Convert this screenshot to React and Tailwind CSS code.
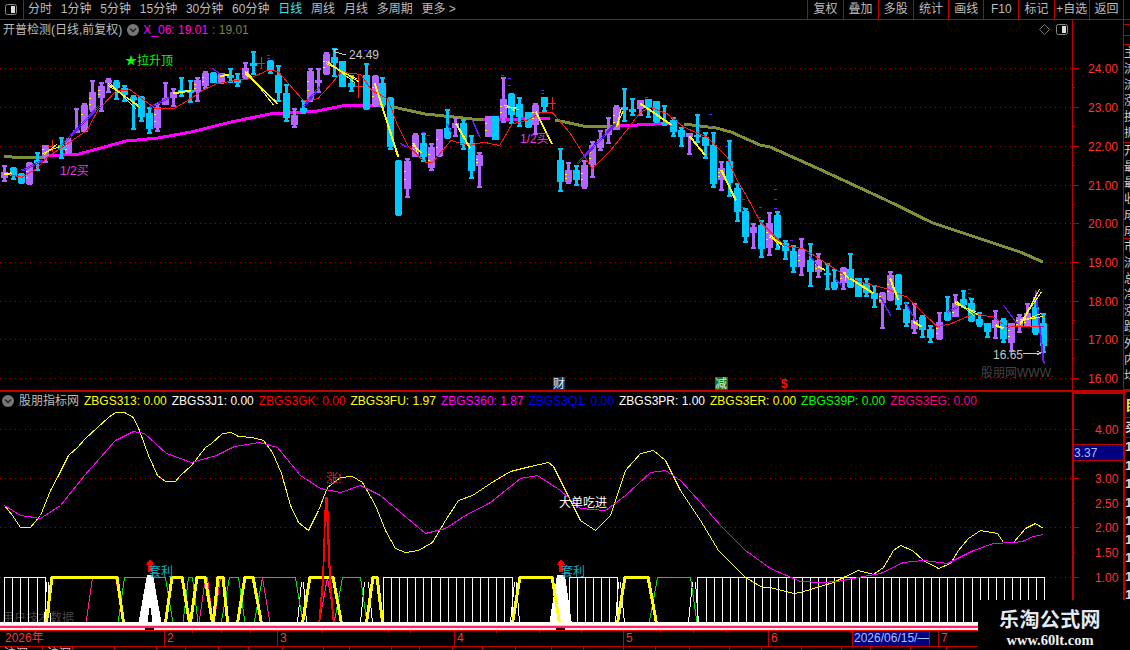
import React from "react"

const RED = "#c00000"
const PURPLE = "#b266ff"
const CYAN = "#00c8ff"

const z1 = ([x, y]) => [x / 2.775, y / 3]
const z9 = ([x, y]) => [560 + x / 3, 90 + y / 3]
const z8 = ([x, y]) => [850 + x / 3, 200 + y / 3]
const toPoints = (pts) => pts.map((p) => p.join(",")).join(" ")

// x in zoomed picture, kind, high, body top, body bottom, low (y is 3x page y)
const candlesA = [
  [12, "p", 495, 515, 535, 545], [35, "c", 500, 503, 527, 540], [57, "c", 520, 523, 550, 552], [80, "p", 485, 490, 553, 555],
  [103, "c", 455, 480, 490, 512], [124, "p", 435, 435, 470, 490], [147, "r", 420, 436, 438, 455], [168, "c", 410, 435, 450, 478],
  [190, "p", 415, 420, 460, 462], [212, "p", 325, 390, 400, 400], [234, "p", 310, 315, 395, 395], [256, "p", 240, 275, 330, 335],
  [279, "p", 245, 258, 295, 335], [301, "p", 235, 240, 250, 280], [323, "c", 240, 245, 265, 300], [345, "c", 255, 265, 285, 305],
  [368, "c", 285, 290, 300, 390], [391, "c", 288, 290, 352, 365], [414, "c", 320, 340, 388, 403], [436, "p", 310, 320, 385, 395],
  [458, "p", 245, 295, 315, 315], [481, "p", 265, 275, 295, 320], [503, "c", 230, 270, 280, 290], [526, "c", 240, 270, 280, 310],
  [548, "p", 232, 240, 275, 305], [570, "p", 212, 218, 258, 268], [592, "c", 215, 218, 248, 250], [614, "p", 218, 220, 250, 252],
  [637, "c", 203, 225, 235, 250], [659, "c", 220, 238, 250, 262], [681, "p", 185, 205, 235, 240], [703, "c", 152, 188, 198, 225],
  [725, "r", 172, 189, 191, 208], [750, "c", 180, 183, 210, 222], [772, "c", 195, 225, 278, 305], [795, "c", 252, 278, 355, 365],
  [817, "p", 325, 345, 375, 385], [840, "c", 300, 325, 335, 342], [861, "p", 203, 212, 300, 305], [883, "p", 205, 240, 250, 280],
  [906, "p", 155, 162, 222, 225], [928, "c", 145, 170, 190, 230], [950, "c", 183, 183, 260, 262], [973, "c", 225, 250, 262, 275],
  [995, "r", 225, 256, 258, 295], [1017, "c", 188, 225, 328, 330], [1040, "p", 225, 228, 318, 320], [1061, "c", 230, 250, 315, 320],
  [1083, "c", 292, 295, 440, 450], [1105, "c", 480, 482, 645, 648], [1130, "p", 475, 482, 567, 595], [1152, "p", 400, 405, 470, 472],
  [1174, "c", 400, 428, 472, 485], [1196, "p", 430, 440, 503, 512], [1219, "p", 388, 388, 468, 470], [1241, "c", 327, 385, 415, 418],
  [1263, "p", 352, 370, 385, 412], [1285, "c", 358, 370, 435, 450], [1308, "c", 405, 430, 512, 538], [1330, "p", 455, 465, 497, 565],
  [1353, "p", 348, 348, 412, 412], [1375, "c", 348, 348, 420, 420], [1397, "p", 232, 298, 355, 370], [1419, "c", 278, 282, 345, 372],
  [1441, "c", 292, 312, 350, 380], [1464, "c", 335, 335, 382, 384], [1486, "p", 310, 315, 375, 405], [1510, "c", 290, 292, 320, 335],
  [1532, "r", 292, 310, 312, 330], [1555, "c", 443, 480, 545, 575],
]

const candlesB = [
  [25, "p", 217, 240, 275, 282], [49, "c", 225, 240, 270, 288], [73, "p", 210, 225, 290, 297], [97, "p", 152, 165, 225, 265],
  [121, "p", 120, 148, 175, 182], [145, "p", 80, 118, 135, 163], [169, "p", 45, 50, 120, 120], [193, "c", -6, 52, 60, 95],
  [217, "c", 25, 58, 65, 78], [241, "p", 30, 30, 58, 77], [265, "c", 28, 28, 55, 83], [289, "c", 33, 33, 97, 100],
  [313, "c", 45, 95, 105, 107], [340, "c", 82, 90, 125, 140], [364, "c", 110, 120, 140, 170], [388, "p", 130, 130, 140, 195],
  [412, "c", 72, 135, 140, 158], [436, "c", 127, 142, 168, 208], [460, "c", 127, 165, 282, 293], [484, "p", 213, 233, 270, 303],
  [508, "c", 150, 213, 278, 320], [532, "c", 278, 295, 365, 395], [556, "c", 355, 362, 442, 460], [580, "p", 400, 410, 428, 476],
  [604, "c", 390, 405, 478, 505], [628, "p", 367, 400, 473, 498], [652, "c", 363, 375, 445, 480], [676, "c", 450, 460, 483, 510],
  [700, "c", 465, 484, 530, 550], [724, "p", 445, 477, 530, 558], [750, "c", 460, 510, 545, 590], [775, "p", 488, 510, 545, 565],
  [800, "c", 520, 548, 556, 600], [823, "c", 537, 575, 595, 600], [848, "p", 530, 535, 580, 600],
]

const candlesC = [
  [0, "c", 160, 208, 260, 265], [25, "c", 233, 235, 290, 292], [49, "c", 235, 250, 280, 290], [73, "c", 255, 280, 298, 323],
  [97, "p", 275, 278, 310, 388], [121, "p", 213, 225, 300, 302], [145, "c", 222, 225, 315, 330], [169, "c", 305, 328, 370, 382],
  [193, "p", 310, 360, 387, 402], [217, "c", 345, 350, 390, 415], [241, "c", 375, 388, 415, 430], [267, "p", 335, 365, 418, 420],
  [291, "c", 287, 337, 360, 362], [315, "p", 283, 310, 350, 352], [340, "c", 270, 298, 315, 325], [364, "c", 295, 310, 362, 365],
  [388, "c", 335, 358, 375, 380], [412, "c", 368, 368, 395, 415], [436, "p", 330, 360, 385, 418], [460, "c", 355, 360, 418, 430],
  [484, "p", 368, 370, 430, 455], [508, "p", 342, 350, 382, 398], [532, "p", 310, 340, 378, 380], [556, "c", 290, 320, 400, 405],
  [580, "c", 338, 370, 438, 460],
]

const candles = [
  ...candlesA.map(([x, k, a, b, c, d]) => [x / 2.775, k, a / 3, b / 3, c / 3, d / 3]),
  ...candlesB.map(([x, k, a, b, c, d]) => [560 + x / 3, k, 90 + a / 3, 90 + b / 3, 90 + c / 3, 90 + d / 3]),
  ...candlesC.map(([x, k, a, b, c, d]) => [850 + x / 3, k, 200 + a / 3, 200 + b / 3, 200 + c / 3, 200 + d / 3]),
]

const maSegments = [
  ["#809038", [[4, 156], [12, 157], [36, 157], [47, 157]]],
  ["#ff00ff", [[47, 156], [79, 154], [108, 146], [126, 141], [158, 138], [191, 132], [231, 122], [270, 114], [288, 113], [317, 111], [342, 106], [382, 105]]],
  ["#809038", [[393, 107], [407, 110], [425, 114], [454, 117], [472, 119], [483, 120]]],
  ["#ff00ff", [[483, 120], [520, 119], [550, 118]]],
  ["#809038", [[555, 120], [565, 122], [583, 126], [605, 127], [619, 126]]],
  ["#ff00ff", [[619, 126], [655, 124], [673, 123]]],
  ["#809038", [[684, 124], [716, 128], [731, 132], [760, 145], [770, 147], [817, 168], [886, 200], [933, 223], [963, 233], [1020, 252], [1043, 262]]],
]

const redLine = [
  ...[[12, 520], [60, 530], [100, 505], [130, 470], [240, 390], [270, 330], [320, 272], [360, 268], [400, 300], [430, 325], [480, 325], [520, 300], [560, 270], [600, 250], [650, 240], [690, 235], [740, 210], [770, 212], [800, 250], [840, 300], [880, 295], [910, 260], [945, 215], [1000, 222], [1030, 270], [1075, 295], [1100, 370], [1130, 435], [1180, 487], [1200, 485], [1250, 420], [1300, 435], [1340, 425], [1385, 435], [1420, 370], [1460, 360], [1500, 335], [1530, 335], [1555, 365]].map(z1),
  ...[[30, 130], [95, 235], [150, 180], [190, 130], [240, 65], [270, 50], [320, 70], [370, 110], [440, 140], [500, 200], [530, 270], [560, 320], [600, 395], [670, 465], [730, 475], [800, 520], [870, 565]].map(z9),
  ...[[50, 250], [110, 265], [170, 290], [220, 340], [260, 378], [300, 370], [370, 340], [430, 350], [470, 380], [510, 378], [580, 378]].map(z8),
]

const thickYellow = [
  ...[[12, 522, 32, 520], [480, 280, 530, 272], [610, 228, 635, 225], [1040, 250, 1105, 470], [1265, 370, 1305, 445], [1487, 335, 1532, 432]].map(([a, b, c, d]) => [...z1([a, b]), ...z1([c, d])]),
  ...[[240, 40, 335, 105], [388, 138, 435, 195], [484, 240, 528, 332], [775, 530, 795, 540]].map(([a, b, c, d]) => [...z9([a, b]), ...z9([c, d])]),
  ...[[0, 235, 70, 280], [120, 235, 145, 300], [190, 365, 215, 380], [436, 375, 460, 385]].map(([a, b, c, d]) => [...z8([a, b]), ...z8([c, d])]),
]

const fanYellow = [
  ...[[122, 458, 165, 440], [300, 250, 390, 325], [680, 215, 770, 312], [905, 185, 995, 245], [1145, 430, 1170, 460], [1400, 315, 1440, 330]].map(([a, b, c, d]) => [...z1([a, b]), ...z1([c, d])]),
  ...[[170, 105, 190, 62], [628, 435, 672, 470], [850, 545, 870, 570]].map(([a, b, c, d]) => [...z9([a, b]), ...z9([c, d])]),
  ...[[315, 305, 385, 345], [510, 370, 575, 275], [510, 360, 578, 350]].map(([a, b, c, d]) => [...z8([a, b]), ...z8([c, d])]),
]

const violet = [
  ...[[60, 510, 118, 480], [170, 435, 275, 315], [415, 320, 470, 290], [590, 205, 615, 225], [840, 320, 885, 260], [1240, 370, 1250, 395], [1310, 360, 1330, 410], [1110, 430, 1130, 440]].map(([a, b, c, d]) => [...z1([a, b]), ...z1([c, d])]),
  ...[[50, 220, 165, 100], [745, 490, 770, 525], [825, 565, 840, 580]].map(([a, b, c, d]) => [...z9([a, b]), ...z9([c, d])]),
  ...[[90, 290, 120, 345], [165, 305, 195, 360], [290, 335, 320, 320], [460, 315, 500, 370], [555, 270, 580, 490]].map(([a, b, c, d]) => [...z8([a, b]), ...z8([c, d])]),
]

const violetDashes = [
  ...[[745, 165], [745, 175], [1015, 150], [1395, 225], [1415, 235], [1415, 255], [1505, 270], [1505, 280], [1175, 395], [1190, 405]].map(z1),
  ...[[450, 73], [450, 107], [500, 168], [550, 328], [550, 350], [600, 352], [598, 380], [645, 298], [645, 328], [645, 355], [695, 450], [258, 20]].map(z9),
  ...[[358, 268], [358, 280], [358, 292]].map(z8),
]

const crosses = [[52, 140, 152], [261, 57, 69], [358.5, 75, 98], [552, 97, 110]]

const yellowLine = [[4, 505], [12, 515], [20, 527], [30, 527], [40, 515], [50, 490], [58, 475], [68, 455], [77, 447], [85, 438], [108, 417], [115, 412], [124, 412], [133, 417], [139, 430], [148, 455], [157, 475], [165, 481], [175, 481], [180, 475], [191, 465], [205, 447], [211, 443], [222, 433], [231, 432], [238, 436], [252, 437], [263, 440], [272, 452], [281, 473], [290, 505], [298, 522], [308, 530], [318, 510], [327, 487], [340, 477], [352, 476], [362, 482], [375, 505], [385, 530], [395, 548], [405, 552], [418, 550], [432, 542], [445, 520], [458, 500], [472, 495], [490, 483], [510, 471], [530, 466], [548, 462], [553, 466], [565, 490], [580, 520], [595, 530], [610, 515], [625, 470], [640, 453], [653, 450], [665, 460], [680, 490], [700, 520], [718, 550], [745, 577], [762, 587], [770, 587], [793, 593], [800, 592], [813, 588], [833, 582], [843, 577], [858, 570], [873, 574], [883, 567], [893, 550], [900, 545], [912, 550], [923, 560], [938, 568], [950, 563], [958, 550], [968, 538], [980, 530], [997, 533], [1003, 542], [1013, 542], [1025, 528], [1035, 523], [1043, 528]]

const magentaLine = [[4, 505], [20, 515], [40, 518], [60, 505], [84, 475], [115, 440], [133, 431], [144, 433], [166, 453], [191, 462], [216, 455], [234, 446], [259, 442], [277, 447], [300, 475], [320, 488], [340, 492], [360, 485], [380, 495], [400, 512], [425, 533], [445, 528], [465, 515], [490, 502], [520, 478], [537, 475], [560, 490], [580, 508], [605, 510], [625, 495], [650, 472], [665, 470], [680, 480], [700, 502], [720, 525], [745, 550], [770, 568], [800, 581], [820, 582], [837, 581], [863, 576], [880, 573], [903, 562], [923, 560], [947, 563], [973, 550], [993, 543], [1013, 542], [1022, 541], [1033, 536], [1043, 534]]

const trapezoid = (a, b, c, d) => `${a},626 ${b},577 ${c},577 ${d},626`

const yellowTraps = [[46, 52, 117, 124], [165, 172, 182, 190], [190, 197, 205, 213], [213, 218, 223, 228], [237, 245, 253, 262], [302, 310, 333, 342], [366, 373, 377, 383], [512, 520, 552, 560], [617, 625, 648, 657]]
const pinkTraps = [[85, 92, 115, 124], [198, 205, 207, 213], [237, 245, 262, 270], [318, 327, 327, 335], [213, 220, 222, 228]]
const greenTraps = [[117, 124, 165, 173], [182, 188, 192, 198], [220, 229, 238, 245], [253, 262, 295, 303], [333, 342, 360, 367], [648, 657, 690, 697]]
const whiteSpikes = [[297, 301, 303, 306], [360, 364, 368, 372], [510, 514, 516, 519], [615, 618, 620, 624], [688, 692, 695, 698], [44, 46, 48, 50]]

const whiteBarIndexes = [[0, 5], [47, 63], [70, 76], [86, 129]]

const tabs = ["分时", "1分钟", "5分钟", "15分钟", "30分钟", "60分钟", "日线", "周线", "月线", "多周期", "更多 >"]
const actions = ["复权", "叠加", "多股", "统计", "画线", "F10", "标记", "+自选", "返回"]

const legend = [
  ["ZBGS313: 0.00", "#ffff00"],
  ["ZBGS3J1: 0.00", "#ffffff"],
  ["ZBGS3GK: 0.00", "#ff0000"],
  ["ZBGS3FU: 1.97", "#ffff00"],
  ["ZBGS360: 1.87", "#ff00ff"],
  ["ZBGS3Q1: 0.00", "#0000ff"],
  ["ZBGS3PR: 1.00", "#ffffff"],
  ["ZBGS3ER: 0.00", "#ffff00"],
  ["ZBGS39P: 0.00", "#00ff00"],
  ["ZBGS3EG: 0.00", "#ff0080"],
]

const priceLabels = [[24, 68.5], [23, 107.5], [22, 146.5], [21, 185.5], [20, 223.5], [19, 262.5], [18, 301.5], [17, 339.5], [16, 378.5]]
const subLabels = [["4.00", 429.5], ["3.00", 478.5], ["2.50", 503.5], ["2.00", 527.5], ["1.50", 552.5], ["1.00", 577.5]]

const months = [["2", 164], ["3", 277], ["4", 454], ["5", 623], ["6", 768]]
const dateTicks = [192, 221, 250, 322, 388, 410, 496, 539, 581, 660, 693, 726, 850]
const footerCells = [43, 30, 42, 42, 29, 33, 30, 34, 41, 26, 42, 28, 33, 30, 33, 36, 32, 40, 32, 34, 40, 32, 40, 40, 29, 40, 36, 40]

function PanelIcon() {
  return (
    <svg width="13" height="13" viewBox="0 0 13 13">
      <rect x="0.5" y="1.5" width="11" height="10" rx="2" fill="none" stroke="#888" />
      <rect x="6" y="3" width="4" height="7" fill="#ddd" />
    </svg>
  )
}

function ChevronDot() {
  return (
    <svg width="12" height="12" viewBox="0 0 12 12">
      <circle cx="6" cy="6" r="6" fill="#777" />
      <path d="M3 4.5 L6 7.5 L9 4.5" fill="none" stroke="#222" strokeWidth="1.4" />
    </svg>
  )
}

function Toolbar() {
  return (
    <div className="flex h-[20px] shrink-0 border-b border-[#c00000] text-[12px] leading-[19px] text-[#bdbdbd]">
      <div className="flex w-[24px] items-center justify-center border-r border-[#c00000]">
        <PanelIcon />
      </div>
      <div className="flex gap-[8.8px] pl-[4px]">
        {tabs.map((tab) => (
          <span key={tab} className={tab === "日线" ? "text-[#40e0f0]" : ""}>
            {tab}
          </span>
        ))}
      </div>
      <div className="ml-auto flex pr-[6px]">
        {actions.map((action) => (
          <div key={action} className="w-[35.2px] border-l border-[#c00000] text-center last:border-r">
            {action}
          </div>
        ))}
      </div>
    </div>
  )
}

function CandleChart() {
  return (
    <svg className="block" width="1072" height="351" viewBox="0 39 1072 351" shapeRendering="crispEdges">
      {priceLabels.map(([p, y]) => (
        <line key={p} x1="0" x2="1072" y1={y} y2={y} stroke="#b00000" strokeDasharray="1 4" />
      ))}
      {maSegments.map(([color, pts], i) => (
        <polyline key={i} points={toPoints(pts)} fill="none" stroke={color} strokeWidth="3" />
      ))}
      {candles.map(([x, kind, high, top, bottom, low], i) => {
        if (kind === "r") return null
        const color = kind === "p" ? PURPLE : CYAN
        const rx = Math.round(x)
        return (
          <g key={i} fill={color}>
            <rect x={rx - 1} y={high} width="3" height={low - high} />
            <rect x={rx - 2} y={high} width="5" height="2" />
            <rect x={rx - 2} y={low - 2} width="5" height="2" />
            <rect x={rx - 3} y={top} width="7" height={Math.max(bottom - top, 2)} />
            {kind === "p" && bottom - top > 10 && (
              <g fill="#ffff00">
                <rect x={rx - 3} y={top + (bottom - top) * 0.35} width="2" height="1" />
                <rect x={rx - 3} y={top + (bottom - top) * 0.65} width="2" height="1" />
              </g>
            )}
          </g>
        )
      })}
      {crosses.map(([x, y1, y2]) => (
        <g key={x} stroke="#ff2020">
          <line x1={x} x2={x} y1={y1} y2={y2} />
          <line x1={x - 4} x2={x + 4} y1={y1 + (y2 - y1) / 2} y2={y1 + (y2 - y1) / 2} />
        </g>
      ))}
      <polyline points={toPoints(redLine)} fill="none" stroke="#ff1818" transform="translate(0.5 0.5)" />
      {violet.map(([a, b, c, d], i) => (
        <g key={i} stroke="#6a1bff">
          <line x1={a} y1={b} x2={c} y2={d} />
          <line x1={a + 1} y1={b + 1} x2={c + 1} y2={d + 1} />
        </g>
      ))}
      {violetDashes.map(([x, y], i) => (
        <rect key={i} x={x - 1.5} y={y} width="3" height="1" fill="#6a1bff" />
      ))}
      {fanYellow.map(([a, b, c, d], i) => (
        <g key={i} stroke="#ffff00">
          <line x1={a} y1={b} x2={c} y2={d} />
          <line x1={a} y1={b + 2} x2={c - 2} y2={d - 3} />
          <line x1={a + 2} y1={b} x2={c - 4} y2={d + 1} />
        </g>
      ))}
      {thickYellow.map(([a, b, c, d], i) => (
        <line key={i} x1={a} y1={b} x2={c} y2={d} stroke="#ffff00" strokeWidth="2" />
      ))}
      <text x="125" y="65" fontSize="12" fill="#00ff00">★拉升顶</text>
      <text x="60" y="175" fontSize="12" fill="#e040e0">1/2买</text>
      <text x="520" y="143" fontSize="12" fill="#e040e0">1/2买</text>
      <text x="349" y="59" fontSize="12" fill="#c8c8c8">24.49</text>
      <polyline points="346,55 335,52 334,49 338,49" fill="none" stroke="#c8c8c8" />
      <text x="993" y="359" fontSize="12" fill="#c8c8c8">16.65</text>
      <polyline points="1023,353 1041,353 1037,351 1041,353 1037,355" fill="none" stroke="#c8c8c8" />
      <text x="981" y="377" fontSize="12" fill="#444">股朋网WWW.</text>
      <rect x="553" y="377" width="12" height="13" fill="#0a3a6a" />
      <text x="553" y="388" fontSize="12" fill="#e8e8e8">财</text>
      <rect x="715" y="377" width="13" height="13" fill="#0a7a10" />
      <text x="715" y="388" fontSize="12" fill="#e8e8e8">减</text>
      <text x="781" y="388" fontSize="12" fontWeight="700" fill="#ff1010">$</text>
    </svg>
  )
}

function PriceAxis() {
  return (
    <svg className="block shrink-0" width="51" height="370" viewBox="1072 20 51 370" shapeRendering="crispEdges">
      <line x1="1072.5" x2="1072.5" y1="20" y2="390" stroke={RED} />
      {priceLabels.map(([p, y]) => (
        <g key={p}>
          <line x1="1072" x2="1079" y1={y} y2={y} stroke={RED} />
          <line x1="1072" x2="1075" y1={y + 19} y2={y + 19} stroke={RED} />
          <text x="1088" y={y + 4} fontSize="12" fill="#ff3333">{p}.00</text>
        </g>
      ))}
    </svg>
  )
}

function IndicatorChart() {
  const bars = []
  whiteBarIndexes.forEach(([from, to]) => {
    for (let i = from; i <= to; i++) bars.push(Math.round(4.3 + 8.06 * i) + 0.5)
  })
  return (
    <svg className="block" width="1072" height="221" viewBox="0 410 1072 221" shapeRendering="crispEdges">
      {subLabels.filter(([t]) => t.endsWith("00")).map(([t, y]) => (
        <line key={t} x1="0" x2="1072" y1={y} y2={y} stroke="#b00000" strokeDasharray="1 4" />
      ))}
      <text x="2" y="622" fontSize="12" fill="#444">用户技术数据</text>
      {bars.map((x, i) => (
        <line key={i} x1={x} x2={x} y1="577" y2="622" stroke="#fff" />
      ))}
      {whiteBarIndexes.map(([from, to]) => (
        <line key={from} x1={Math.round(4.3 + 8.06 * from)} x2={Math.round(4.3 + 8.06 * to)} y1="577.5" y2="577.5" stroke="#fff" />
      ))}
      <g transform="translate(0.5 0.5)">
        {whiteSpikes.map(([a, b, c, d], i) => (
          <g key={i} stroke="#fff" fill="none">
            <polyline points={`${a},622 ${b},582`} />
            <polyline points={`${c},582 ${d},622`} />
          </g>
        ))}
        {greenTraps.map((t, i) => (
          <polyline key={i} points={trapezoid(...t)} fill="none" stroke="#00e000" />
        ))}
        {pinkTraps.map((t, i) => (
          <polyline key={i} points={trapezoid(...t)} fill="none" stroke="#ff2090" />
        ))}
      </g>
      <polygon points="138,625 147,575 153,575 162,625 153,625 150,605 147,625" fill="#fff" />
      <polygon points="549,625 557,575 565,575 572,625" fill="#fff" />
      {yellowTraps.map((t, i) => (
        <polyline key={i} points={trapezoid(...t)} fill="none" stroke="#ffff00" strokeWidth="3" />
      ))}
      <polygon points="318,626 322,580 325,497 328,497 331,580 335,626 333,626 329,580 326,510 324,580 320,626" fill="#ff0000" />
      <g transform="translate(0.5 0.5)">
        <polyline points={toPoints(yellowLine)} fill="none" stroke="#ffff00" />
        <polyline points={toPoints(magentaLine)} fill="none" stroke="#ff00ff" />
      </g>
      <rect x="0" y="622" width="1072" height="3" fill="#fff" />
      <rect x="0" y="625" width="1072" height="1" fill="#ffe040" />
      <rect x="0" y="626" width="1072" height="2" fill="#ff2060" />
      <rect x="0" y="628" width="1072" height="2" fill="#fff0f0" />
      <rect x="145" y="628" width="9" height="2" fill="#000" />
      <rect x="556" y="628" width="9" height="2" fill="#000" />
      <rect x="0" y="630" width="1072" height="1" fill="#ff0000" />
      <text x="326" y="483" fontSize="12" fill="#d03030">涨!</text>
      <text x="559" y="507" fontSize="12" fill="#ffffff">大单吃进</text>
      <path d="M150 559 L154.5 565 L152 565 L152 572 L148 572 L148 565 L145.5 565 Z" fill="#ff0000" />
      <path d="M561 559 L565.5 565 L563 565 L563 572 L559 572 L559 565 L556.5 565 Z" fill="#ff0000" />
      <text x="149" y="576" fontSize="12" fill="#10b0c0">套利</text>
      <text x="561" y="576" fontSize="12" fill="#10b0c0">套利</text>
    </svg>
  )
}

function IndicatorAxis() {
  return (
    <svg className="block shrink-0" width="51" height="258" viewBox="1072 392 51 258" shapeRendering="crispEdges">
      <rect x="1072" y="392" width="2" height="258" fill={RED} />
      <rect x="1072" y="392" width="51" height="2" fill={RED} />
      {subLabels.map(([t, y]) => (
        <g key={t}>
          <line x1="1072" x2={t.endsWith("50") ? 1075 : 1079} y1={y} y2={y} stroke={RED} />
          <text x="1095" y={y + 4} fontSize="12" fill="#ff3333">{t}</text>
        </g>
      ))}
      <rect x="1074" y="444" width="49" height="17" fill="#000080" />
      <line x1="1074" x2="1123" y1="444.5" y2="444.5" stroke={RED} />
      <line x1="1074" x2="1123" y1="460.5" y2="460.5" stroke={RED} />
      <text x="1074" y="457" fontSize="12" fill="#a8c0ff">3.37</text>
    </svg>
  )
}

function SideStripTop() {
  const sections = [
    [5, []],
    [11, []],
    [9, []],
    [98, ["主力净额", "流入资金", "流出资金", "涨跌幅度", "换手比率", "振幅数据"]],
    [96, ["开盘价格", "最高价格", "最低价格", "收盘价格", "成交数量", "成交金额"]],
    [97, ["市盈比率", "流通股本", "总计股本", "净利润率", "涨停价格", "跌停价格"]],
    [54, ["外盘数量", "内盘数量", "均价"]],
  ]
  return (
    <div className="flex h-[370px] w-[7px] shrink-0 flex-col overflow-hidden border-l border-[#c00000] text-[12px] leading-[16px] text-[#cfcfcf]">
      {sections.map(([height, rows], i) => (
        <div key={i} style={{ height }} className="shrink-0 overflow-hidden whitespace-nowrap border-b border-[#c00000]">
          {rows.map((row) => (
            <div key={row}>{row}</div>
          ))}
        </div>
      ))}
    </div>
  )
}

function SideStripBottom() {
  return (
    <div className="flex h-[258px] w-[7px] shrink-0 flex-col overflow-hidden border-l-2 border-[#c00000] font-bold">
      <div className="h-[26px] shrink-0 overflow-hidden border-b border-[#c00000] text-[14px] leading-[26px] text-[#e8e840]">目</div>
      <div className="h-[20px] shrink-0 overflow-hidden border-b border-[#c00000] text-[12px] leading-[20px] text-[#ddd]">买</div>
      {["a", "b", "c", "d", "e", "f", "g", "h", "i"].map((k) => (
        <div key={k} className="h-[18.5px] shrink-0 text-[13px] leading-[18px] text-[#ddd]">1</div>
      ))}
    </div>
  )
}

function DateBar() {
  return (
    <div className="relative h-[16px] shrink-0 border-b border-[#c00000] text-[12px] leading-[15px] text-[#ff3333]">
      <span className="pl-[5px]">2026年</span>
      {months.map(([label, x]) => (
        <span key={label} style={{ left: x }} className="absolute top-0 h-[15px] border-l border-[#c00000] pl-[2px]">
          {label}
        </span>
      ))}
      {dateTicks.map((x) => (
        <span key={x} style={{ left: x }} className="absolute top-0 h-[2px] w-px bg-[#c00000]" />
      ))}
      <span className="absolute left-[852px] top-0 h-[15px] w-[78px] overflow-hidden whitespace-nowrap border-x border-[#c00000] bg-[#000080] pl-px text-[#a8c0ff]">
        2026/06/15/—
      </span>
      <span className="absolute left-[938px] top-0 h-[15px] border-l border-[#c00000] pl-[2px]">7</span>
    </div>
  )
}

function FooterRow() {
  return (
    <div className="flex h-[3px] overflow-hidden text-[12px] leading-[14px] text-[#ccc]">
      {footerCells.map((w, i) => (
        <div key={i} style={{ width: w }} className="shrink-0 border-r border-[#c00000] pl-[4px]">
          {i < 2 ? "沪深" : ""}
        </div>
      ))}
    </div>
  )
}

export default function App() {
  return (
    <div className="relative flex h-[650px] w-[1130px] flex-col overflow-hidden bg-black font-['Liberation_Sans','Noto_Sans_CJK_SC',sans-serif]">
      <Toolbar />

      <div className="flex h-[372px] shrink-0 border-b-2 border-[#c00000]">
        <div className="w-[1072px] shrink-0">
          <div className="flex h-[19px] items-center gap-[5px] pl-[3px] pr-[3px] text-[12px] text-[#bdbdbd]">
            <span>开普检测(日线,前复权)</span>
            <ChevronDot />
            <span className="ml-[-1px] text-[#ff00ff]">X_06: 19.01</span>
            <span className="ml-[-1px] text-[#808040]">: 19.01</span>
            <svg className="ml-auto mr-px" width="11" height="11" viewBox="0 0 11 11">
              <path d="M5.5 0.5 L10.5 5.5 L5.5 10.5 L0.5 5.5 Z" fill="none" stroke="#777" />
            </svg>
            <PanelIcon />
          </div>
          <CandleChart />
        </div>
        <PriceAxis />
        <SideStripTop />
      </div>

      <div className="flex h-[258px] shrink-0">
        <div className="w-[1072px] shrink-0">
          <div className="flex h-[18px] items-center gap-[5px] pl-[2px] text-[12px]">
            <ChevronDot />
            <span className="text-[#bdbdbd]">股朋指标网</span>
            {legend.map(([label, color]) => (
              <span key={label} style={{ color }}>
                {label}
              </span>
            ))}
          </div>
          <IndicatorChart />
          <DateBar />
          <FooterRow />
        </div>
        <IndicatorAxis />
        <SideStripBottom />
      </div>

      <div className="absolute bottom-0 right-0 flex h-[50px] w-[152px] flex-col items-center bg-black pr-[8px] pt-[8px]">
        <div className="text-[20px] font-bold leading-[24px] tracking-[0.4px] text-[#e4eaf4]">乐淘公式网</div>
        <div className="font-['Liberation_Serif',serif] text-[14.5px] font-bold leading-[16px] text-[#f2f2f2]">www.60lt.com</div>
      </div>
    </div>
  )
}
